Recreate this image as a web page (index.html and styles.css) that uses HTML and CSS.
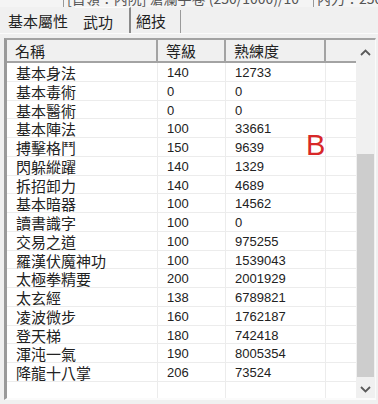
FILE: index.html
```html
<!DOCTYPE html>
<html lang="zh-Hant">
<head>
<meta charset="utf-8">
<title>武功</title>
<link rel="stylesheet" href="styles.css">
</head>
<body>
<div class="status">
  <div class="st st1"></div>
  <div class="st st2"><span class="sttext">[首領：內院] 滄瀾手卷 (250/1000)/10</span></div>
  <div class="st st3"><span class="sttext">內力：250/250</span></div>
</div>
<div class="tabs">
  <div class="tab">基本屬性</div>
  <div class="tab sel">武功</div>
  <div class="tab last">絕技</div>
</div>
<div class="panel">
  <div class="grid">
    <div class="table">
      <div class="row head">
        <div class="c c1">名稱</div><div class="c c2">等級</div><div class="c c3">熟練度</div><div class="c c4"></div>
      </div>
      <div class="row"><div class="c c1">基本身法</div><div class="c c2">140</div><div class="c c3">12733</div><div class="c c4"></div></div>
      <div class="row"><div class="c c1">基本毒術</div><div class="c c2">0</div><div class="c c3">0</div><div class="c c4"></div></div>
      <div class="row"><div class="c c1">基本醫術</div><div class="c c2">0</div><div class="c c3">0</div><div class="c c4"></div></div>
      <div class="row"><div class="c c1">基本陣法</div><div class="c c2">100</div><div class="c c3">33661</div><div class="c c4"></div></div>
      <div class="row"><div class="c c1">搏擊格鬥</div><div class="c c2">150</div><div class="c c3">9639</div><div class="c c4"></div></div>
      <div class="row"><div class="c c1">閃躲縱躍</div><div class="c c2">140</div><div class="c c3">1329</div><div class="c c4"></div></div>
      <div class="row"><div class="c c1">拆招卸力</div><div class="c c2">140</div><div class="c c3">4689</div><div class="c c4"></div></div>
      <div class="row"><div class="c c1">基本暗器</div><div class="c c2">100</div><div class="c c3">14562</div><div class="c c4"></div></div>
      <div class="row"><div class="c c1">讀書識字</div><div class="c c2">100</div><div class="c c3">0</div><div class="c c4"></div></div>
      <div class="row"><div class="c c1">交易之道</div><div class="c c2">100</div><div class="c c3">975255</div><div class="c c4"></div></div>
      <div class="row"><div class="c c1">羅漢伏魔神功</div><div class="c c2">100</div><div class="c c3">1539043</div><div class="c c4"></div></div>
      <div class="row"><div class="c c1">太極拳精要</div><div class="c c2">200</div><div class="c c3">2001929</div><div class="c c4"></div></div>
      <div class="row"><div class="c c1">太玄經</div><div class="c c2">138</div><div class="c c3">6789821</div><div class="c c4"></div></div>
      <div class="row"><div class="c c1">凌波微步</div><div class="c c2">160</div><div class="c c3">1762187</div><div class="c c4"></div></div>
      <div class="row"><div class="c c1">登天梯</div><div class="c c2">180</div><div class="c c3">742418</div><div class="c c4"></div></div>
      <div class="row"><div class="c c1">渾沌一氣</div><div class="c c2">190</div><div class="c c3">8005354</div><div class="c c4"></div></div>
      <div class="row"><div class="c c1">降龍十八掌</div><div class="c c2">206</div><div class="c c3">73524</div><div class="c c4"></div></div>
      <div class="row fill"><div class="c c1"></div><div class="c c2"></div><div class="c c3"></div><div class="c c4"></div></div>
    </div>
    <div class="scroll">
      <div class="arrow up"><svg width="11" height="7" viewBox="0 0 11 7"><polyline points="1,6 5.5,1.5 10,6" fill="none" stroke="#5a5a5a" stroke-width="1.8"/></svg></div>
      <div class="track"><div class="thumb"></div></div>
      <div class="arrow down"><svg width="11" height="7" viewBox="0 0 11 7"><polyline points="1,1 5.5,5.5 10,1" fill="none" stroke="#5a5a5a" stroke-width="1.8"/></svg></div>
    </div>
  </div>
</div>
<div class="mark">B</div>
</body>
</html>
```

FILE: styles.css
```css
* { box-sizing: border-box; }

html, body {
  margin: 0;
  padding: 0;
}

body {
  width: 378px;
  height: 404px;
  overflow: hidden;
  position: relative;
  background: #f0f0f0;
  color: #222;
  font-family: "Liberation Sans", "Noto Sans CJK TC", sans-serif;
  font-size: 13px;
}

.status {
  display: flex;
  height: 7px;
  overflow: hidden;
  background: #f4f4f4;
}

.st {
  height: 7px;
  overflow: hidden;
  font-family: "Noto Sans CJK TC", sans-serif;
  font-size: 14px;
  line-height: 14px;
  white-space: nowrap;
  color: #555;
}

.sttext {
  display: block;
  margin-top: -9px;
}

.st1 { width: 64px; border-right: 1px solid #999; }
.st2 { width: 250px; border-right: 1px solid #999; padding-left: 3px; }
.st3 { flex: 1; padding-left: 3px; }

.tabs {
  display: flex;
  align-items: flex-end;
  height: 26px;
}

.tab {
  font-family: "Noto Sans CJK TC", sans-serif;
  font-size: 15px;
  line-height: 22px;
  height: 23px;
  padding-bottom: 1px;
  padding-left: 8px;
  color: #222;
  white-space: nowrap;
}

.tab:first-child { width: 75px; }

.tab.sel {
  width: 56px;
  height: 26px;
  padding-top: 3px;
  border-right: 2px solid #8a8a8a;
  border-top: 1px solid #fafafa;
}

.tab.last {
  width: 50px;
  padding-left: 5px;
  border-right: 1px solid #9a9a9a;
}

.panel {
  border-top: 1px solid #fbfbfb;
  padding: 4px 2px 0 4px;
}

.grid {
  display: flex;
  height: 362px;
  border-top: 2px solid #a3a3a3;
  border-left: 3px solid #9a9a9a;
  border-right: 1px solid #fafafa;
  border-bottom: 2px solid #fbfbfb;
  background: #fff;
}

.table {
  width: 349px;
  display: flex;
  flex-direction: column;
}

.row {
  display: flex;
  height: 18.75px;
  border-bottom: 1px solid #ececec;
}

.c {
  height: 100%;
  border-right: 1px solid #ececec;
  white-space: nowrap;
  padding-left: 9px;
  padding-top: 1px;
  line-height: 18px;
}

.c1 { width: 151px; font-family: "Noto Sans CJK TC", sans-serif; font-size: 15px; }
.c2 { width: 68px; }
.c3 { width: 100px; }
.c4 { width: 30px; border-right: none; }

.row.head {
  height: 23px;
  background: #f0f0f0;
  border-bottom: 2px solid #a3a3a3;
}

.row.head .c {
  font-family: "Noto Sans CJK TC", sans-serif;
  font-size: 15px;
  line-height: 20px;
  padding-top: 1px;
  padding-left: 8px;
  border-right: 2px solid #a3a3a3;
}

.row.head .c4 { border-right: none; }

.row.fill {
  flex: 1;
  border-bottom: none;
}

.scroll {
  width: 19px;
  background: #f0f0f0;
  display: flex;
  flex-direction: column;
}

.arrow {
  display: flex;
  align-items: center;
  justify-content: center;
}

.arrow.up { height: 24px; }
.arrow.down { height: 18px; }

.track {
  flex: 1;
  padding: 0 1px;
}

.thumb {
  margin-top: 90px;
  height: 223px;
  background: #cdcdcd;
}

.mark {
  position: absolute;
  left: 306px;
  top: 131px;
  font-family: "Liberation Sans", sans-serif;
  font-size: 29px;
  line-height: 29px;
  color: #d82828;
}
```
